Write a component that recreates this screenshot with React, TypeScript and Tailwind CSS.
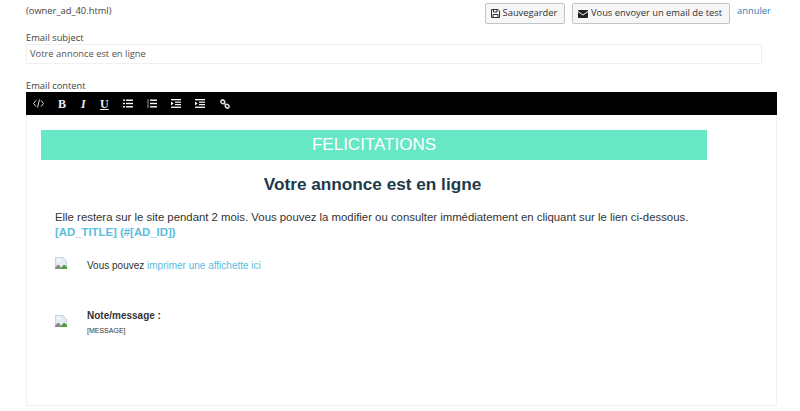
function CodeIcon() {
  return (
    <svg width="11" height="9" viewBox="0 0 11 9" fill="none" stroke="#ddd" strokeWidth="1">
      <path d="M3 1.5L0.5 4.5L3 7.5M8 1.5L10.5 4.5L8 7.5M6.5 0.5L4.5 8.5" />
    </svg>
  );
}

function Lines({ ordered }: { ordered?: boolean }) {
  return (
    <svg width="10" height="9" viewBox="0 0 10 9" fill="#fff">
      <rect x="3" y="0.5" width="7" height="1.4" />
      <rect x="3" y="3.8" width="7" height="1.4" />
      <rect x="3" y="7.1" width="7" height="1.4" />
      {ordered ? (
        <rect x="0.5" y="0" width="1" height="9" fill="#999" />
      ) : (
        <>
          <rect x="0" y="0.5" width="2" height="1.4" />
          <rect x="0" y="3.8" width="2" height="1.4" />
          <rect x="0" y="7.1" width="2" height="1.4" />
        </>
      )}
    </svg>
  );
}

function Indent() {
  return (
    <svg width="10" height="9" viewBox="0 0 10 9" fill="#fff">
      <rect x="0" y="0" width="10" height="1.3" />
      <rect x="4" y="2.6" width="6" height="1.2" />
      <rect x="4" y="5" width="6" height="1.2" />
      <rect x="0" y="7.6" width="10" height="1.3" />
      <path d="M0 2.6L2.6 4.5L0 6.4Z" />
    </svg>
  );
}

function ChainLink() {
  return (
    <svg width="10" height="10" viewBox="0 0 10 10" fill="none" stroke="#ddd" strokeWidth="1.5">
      <ellipse cx="2.8" cy="2.8" rx="2" ry="1.7" transform="rotate(45 2.8 2.8)" />
      <ellipse cx="7.2" cy="7.2" rx="2" ry="1.7" transform="rotate(45 7.2 7.2)" />
      <path d="M4 4L6 6" />
    </svg>
  );
}

function BrokenImage({ className }: { className: string }) {
  return (
    <svg width="12" height="12" viewBox="0 0 12 12" className={`shrink-0 ${className}`}>
      <path d="M0 0H8L12 4V12H0Z" fill="#c9d6ea" />
      <path d="M1 1H7.5L11 4.5V11H1Z" fill="#e6edf7" />
      <path d="M0 12V10.5L3 7.5L5 9L6.5 12Z" fill="#8a8a8a" />
      <path d="M5 12L9 7.5L12 10V12Z" fill="#4fa03a" />
      <path d="M2 3.5a1.6 1 0 1 1 3.2 0a1.6 1 0 1 1-3.2 0" fill="#fff" />
    </svg>
  );
}

const btn = "flex h-[21px] items-center justify-center gap-[3px] rounded-[2px] border border-[#c4c4c4] bg-[#f6f6f6] pr-[2px] text-[#333]";

export default function App() {
  return (
    <div className="h-[411px] w-[800px] overflow-hidden bg-white pl-[26px] pr-[23px] font-['Open_Sans',sans-serif] text-[9.35px] text-[#444]">
      <div className="flex h-[30px] items-start pt-[3px]">
        <span className="mt-[1px] flex-1 leading-[14px]">(owner_ad_40.html)</span>
        <button className={`${btn} w-[80px]`}>
          <svg width="9" height="9" viewBox="0 0 9 9" fill="none" stroke="#333">
            <path d="M0.5 0.5H7L8.5 2V8.5H0.5Z" />
            <path d="M2.5 0.5V3H6V0.5M2 8.5V5.5H7V8.5" />
          </svg>
          Sauvegarder
        </button>
        <button className={`${btn} ml-[7px] w-[158px]`}>
          <svg width="10" height="8" viewBox="0 0 10 8" fill="#222">
            <path d="M1 0H9C9.5 0 10 .5 10 1L5 4.5L0 1C0 .5 .5 0 1 0Z" />
            <path d="M0 2L5 5.5L10 2V7C10 7.5 9.5 8 9 8H1C.5 8 0 7.5 0 7Z" />
          </svg>
          Vous envoyer un email de test
        </button>
        <a className="ml-[7px] mr-[7px] mt-[1px] w-[33px] leading-[14px] text-[#337ab7]">annuler</a>
      </div>

      <label className="mt-[1px] block leading-[13px]">Email subject</label>
      <div className="flex h-[20px] w-[736px] items-center border border-[#f0f0f0] pl-[3px] text-[#555]">Votre annonce est en ligne</div>

      <label className="mt-[15px] block leading-[13px]">Email content</label>
      <div className="flex h-[23px] items-center bg-black pl-[7px] font-['Liberation_Serif',serif] text-[12px] font-bold text-[#eee]">
        <span className="flex w-[25px]"><CodeIcon /></span>
        <span className="w-[23px]">B</span>
        <span className="w-[19px] italic">I</span>
        <span className="w-[23px] underline">U</span>
        <span className="flex w-[24px]"><Lines /></span>
        <span className="flex w-[24px]"><Lines ordered /></span>
        <span className="flex w-[24px]"><Indent /></span>
        <span className="flex w-[25px]"><Indent /></span>
        <span className="flex w-[24px]"><ChainLink /></span>
      </div>

      <div className="h-[291px] border border-t-0 border-[#f0f0f0] pl-[14px] pt-[15px] font-['Liberation_Sans',Arial,sans-serif] text-[#333]">
        <div className="flex h-[30px] w-[666px] items-center justify-center bg-[#66e8c5] text-[17px] text-white">FELICITATIONS</div>
        <h1 className="mt-[14px] w-[663px] text-center text-[17.2px] font-bold leading-[21px] text-[#1c3a4a]">Votre annonce est en ligne</h1>
        <div className="ml-[14px] mt-[15px] w-[690px] text-[11.37px] leading-[15px]">
          <p>Elle restera sur le site pendant 2 mois. Vous pouvez la modifier ou consulter immédiatement en cliquant sur le lien ci-dessous.</p>
          <p className="font-bold text-[#5bbcdc]">[AD_TITLE] (#[AD_ID])</p>
        </div>
        <div className="ml-[14px] mt-[18px] flex items-start gap-[20px] text-[10px]">
          <BrokenImage className="mt-[-1px]" />
          <p className="leading-[15px]">Vous pouvez <span className="text-[#5bbcdc]">imprimer une affichette ici</span></p>
        </div>
        <div className="ml-[14px] mt-[35px] flex items-center gap-[20px]">
          <BrokenImage className="mt-[-2px]" />
          <div>
            <p className="text-[10px] font-bold leading-[15px]">Note/message :</p>
            <p className="mt-[3px] text-[7px] leading-[10px]">[MESSAGE]</p>
          </div>
        </div>
      </div>
    </div>
  );
}
